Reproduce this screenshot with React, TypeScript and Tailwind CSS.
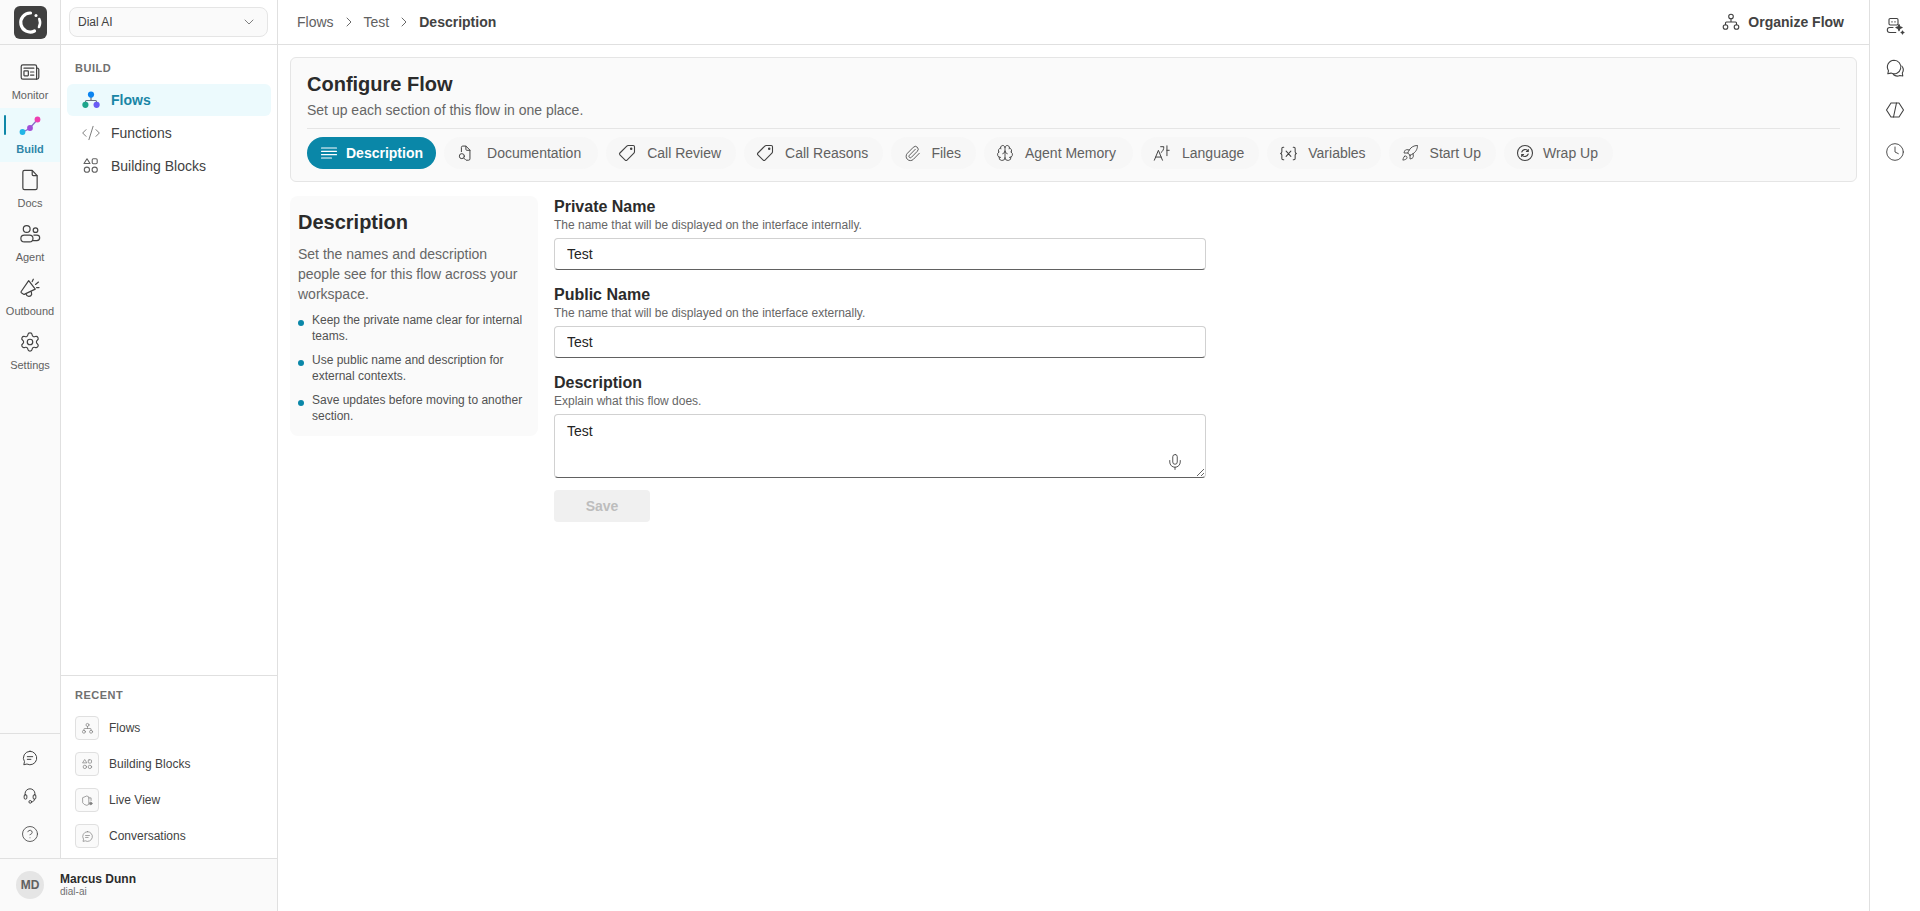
import React from "react";
import { ChevronDown, ChevronRight, CodeXml, Paperclip, Brain, Rocket, Settings, Mic, CircleQuestionMark, Clock } from "lucide-react";

type P = { size?: number; className?: string };

// small wrapper for the hand drawn icons
function Ico({ size = 20, className = "", children }: P & { children: React.ReactNode }) {
  return (
    <svg width={size} height={size} viewBox="0 0 20 20" fill="none" stroke="currentColor" strokeWidth={1.1} strokeLinecap="round" strokeLinejoin="round" className={className}>
      {children}
    </svg>
  );
}

const Logo = () => (
  <svg width="33" height="33" viewBox="0 0 33 33">
    <rect width="33" height="33" rx="6" fill="#404040" />
    <path d="M16.500 7 A9.500 9.500 0 1 0 20.500 25" fill="none" stroke="#fff" strokeWidth="3.200" strokeLinecap="round" />
    <path d="M25.300 13 A9.500 9.500 0 0 1 25 21" fill="none" stroke="#fff" strokeWidth="2.600" strokeLinecap="round" />
    <circle cx="22" cy="9.500" r="1.500" fill="#fff" />
  </svg>
);

const FlowsColor = () => (
  <svg width="20" height="20" viewBox="0 0 20 20">
    <path d="M10 7v3M4.500 13v-1.500a1 1 0 0 1 1-1h9a1 1 0 0 1 1 1V13" fill="none" stroke="#6b7280" strokeWidth="1.200" />
    <circle cx="10" cy="4.600" r="3.100" fill="#0a84f0" />
    <circle cx="4.400" cy="14.800" r="3.100" fill="#1fa58c" />
    <circle cx="15.600" cy="14.800" r="3.100" fill="#6a5cf5" />
  </svg>
);

const BuildColor = () => (
  <svg width="22" height="22" viewBox="0 0 22 22">
    <path d="M3 17.500 10.500 13.500 18.500 4.500" fill="none" stroke="#8b6fc8" strokeWidth="1.400" />
    <circle cx="3.500" cy="17" r="2.900" fill="#22b5e6" />
    <circle cx="11" cy="13" r="2.900" fill="#a04fd8" />
    <circle cx="18.500" cy="4.500" r="2.900" fill="#ee3fb0" />
  </svg>
);

const NewsIco = (p: P) => (
  <Ico {...p}>
    <path d="M3.500 3.500h11a1.500 1.500 0 0 1 1.500 1.500v11.500H3.500A1.500 1.500 0 0 1 2 15V5a1.500 1.500 0 0 1 1.500-1.500z" />
    <path d="M16 6.500h.7A1.300 1.300 0 0 1 18 7.800v7a1.700 1.700 0 0 1-1.700 1.700H16" />
    <path d="M4.500 6.500h9" />
    <rect x="4.500" y="9" width="4" height="4.500" rx="0.500" />
    <path d="M10.500 10h3M10.500 12.800h3" />
  </Ico>
);

const DocIco = (p: P) => (
  <Ico {...p}>
    <path d="M5 1.200h7l4.500 4.800v11.300a1.500 1.500 0 0 1-1.500 1.500H5a1.500 1.500 0 0 1-1.500-1.500V2.700A1.500 1.500 0 0 1 5 1.200z" />
    <path d="M12 1.500v3.500a1 1 0 0 0 1 1h3.300" />
  </Ico>
);

const Blocks = (p: P) => (
  <Ico {...p}>
    <path d="M6 2.800 9 7.500H3z" />
    <rect x="11.200" y="2.800" width="5" height="5" rx="1.200" />
    <circle cx="5.900" cy="13.700" r="2.600" />
    <circle cx="13.700" cy="13.700" r="2.600" />
  </Ico>
);

const Agent = (p: P) => (
  <Ico {...p}>
    <circle cx="7" cy="5.500" r="3.100" />
    <circle cx="15" cy="6.500" r="2.100" />
    <rect x="1.700" y="11" width="11" height="6.200" rx="3.100" />
    <path d="M13.500 11h2.800a2.500 2.500 0 0 1 0 5H13" />
  </Ico>
);

const Megaphone = (p: P) => (
  <Ico {...p}>
    <path d="M8.800 3.300 2 13.200a1 1 0 0 0 .4 1.400l1.800 1a1 1 0 0 0 1 0L14.800 11z" />
    <path d="M6.500 15.500a2.600 2.600 0 0 0 5 .4l-.3-2.500" />
    <path d="M12 4.200 13 2M15 6.800l2.700-2.200M16 9.600h2.200" />
  </Ico>
);

const ChatLines = (p: P) => (
  <Ico {...p}>
    <path d="M10 2.500a7.500 7.500 0 1 1-3.400 14.200l-3.500.8.800-3.400A7.500 7.500 0 0 1 10 2.500z" />
    <path d="M7 8.500h6M7 11.500h4" />
  </Ico>
);

const Headset = (p: P) => (
  <Ico {...p}>
    <path d="M4.500 9V7.500a5.500 5.500 0 0 1 11 0V9" />
    <rect x="3.500" y="8.500" width="3" height="5" rx="1.400" />
    <rect x="13.500" y="8.500" width="3" height="5" rx="1.400" />
    <path d="M15 13.500c0 2-1.500 3-3.200 3" />
    <circle cx="10.300" cy="16.500" r="1.500" />
  </Ico>
);

const OrgFlow = (p: P) => (
  <Ico {...p}>
    <circle cx="10" cy="4.500" r="2.300" />
    <circle cx="4.500" cy="15" r="2.300" />
    <circle cx="15.500" cy="15" r="2.300" />
    <path d="M10 6.800V10M4.500 12.700V11a1 1 0 0 1 1-1h9a1 1 0 0 1 1 1v1.700" />
  </Ico>
);

const Lines = (p: P) => (
  <Ico {...p}>
    <path d="M2.500 5h15M2.500 8.300h15M2.500 11.700h15M2.500 15h10" strokeWidth="1.200" />
  </Ico>
);

const DocSearch = (p: P) => (
  <Ico {...p}>
    <path d="M6 8.500V3.800a1.500 1.500 0 0 1 1.500-1.500H11l4.500 4.500v9.700a1.500 1.500 0 0 1-1.500 1.500h-2.500" />
    <path d="M11 2.500V6a1 1 0 0 0 1 1h3.500" />
    <circle cx="6.500" cy="13.500" r="2.800" />
    <path d="m8.600 15.600 1.900 1.900" />
  </Ico>
);

const TagIco = (p: P) => (
  <Ico {...p}>
    <path d="M11.200 2.500h5a1.300 1.300 0 0 1 1.300 1.300v5a2 2 0 0 1-.6 1.400l-6.900 6.900a1.300 1.300 0 0 1-1.800 0l-5.300-5.300a1.300 1.300 0 0 1 0-1.800l6.900-6.900a2 2 0 0 1 1.400-.6z" />
    <circle cx="14.200" cy="5.800" r="0.700" fill="currentColor" />
  </Ico>
);

const Lang = (p: P) => (
  <Ico {...p}>
    <path d="M1.500 18 6 7l4.500 11M3 14.500h6" />
    <path d="M8.500 3H12c0 3-1 5-3 6.500M15.500 2v11M15.500 7H18" />
  </Ico>
);

const Vars = (p: P) => (
  <Ico {...p}>
    <path d="M5 3.500H4.300A1.300 1.300 0 0 0 3 4.800v3.400c0 .9-.5 1.500-1.300 1.800.8.300 1.300.9 1.300 1.800v3.400a1.300 1.300 0 0 0 1.300 1.300H5" />
    <path d="M15 3.500h.7A1.300 1.300 0 0 1 17 4.800v3.400c0 .9.500 1.500 1.300 1.800-.8.300-1.300.9-1.300 1.800v3.400a1.300 1.300 0 0 1-1.300 1.300H15" />
    <path d="m7.500 7.500 5 5.500M12.500 7.500l-5 5.500" />
  </Ico>
);

const WrapUp = (p: P) => (
  <Ico {...p}>
    <circle cx="10" cy="10" r="7.500" />
    <path d="M6.800 9a3.400 3.400 0 0 1 5.800-1.300l.7.800M13.300 6.600v1.900h-1.900" />
    <path d="M13.200 11a3.400 3.400 0 0 1-5.800 1.300l-.7-.8M6.700 13.400v-1.900h1.900" />
  </Ico>
);

const BotSpark = (p: P) => (
  <Ico {...p}>
    <rect x="4" y="2.500" width="9" height="6.500" rx="1.200" />
    <path d="M7 5.500v.6M10 5.500v.6" />
    <path d="M8 11.500H4.800a2.200 2.200 0 0 0 0 5h6" />
    <path d="M14 8.500l.9 2.200 2.200.9-2.200.9-.9 2.200-.9-2.200-2.200-.9 2.200-.9z" fill="currentColor" />
    <path d="M17.500 15l.4 1.100 1.100.4-1.100.4-.4 1.100-.4-1.100-1.100-.4 1.100-.4z" fill="currentColor" />
  </Ico>
);

const Chats = (p: P) => (
  <Ico {...p}>
    <path d="M9 2.200a6.800 6.800 0 1 1-3 12.900l-3.200.7.700-3.100A6.800 6.800 0 0 1 9 2.200z" />
    <path d="M16.800 8a6 6 0 0 1 .5 7l.5 3-3-.5a6 6 0 0 1-6.500-1" />
  </Ico>
);

const LiveIco = (p: P) => (
  <Ico {...p}>
    <path d="M3 5.500 9 3l3 1.500V16l-3 1.500L5 16 3 14z" />
    <path d="M12 6h3.500v4" />
    <circle cx="15" cy="14.500" r="2" fill="currentColor" />
  </Ico>
);

const CodeHex = (p: P) => (
  <Ico {...p}>
    <path d="M6 3 1.500 10 6 17h8l4.500-7L14 3z" />
    <path d="m11.500 3-3 14" />
  </Ico>
);

const Recents = [
  { label: "Flows", icon: <OrgFlow size={13} /> },
  { label: "Building Blocks", icon: <Blocks size={13} /> },
  { label: "Live View", icon: <LiveIco size={13} /> },
  { label: "Conversations", icon: <ChatLines size={13} /> },
];

const railItems = [
  { label: "Monitor", icon: <NewsIco size={22} /> },
  { label: "Build", icon: <BuildColor />, active: true },
  { label: "Docs", icon: <DocIco size={22} /> },
  { label: "Agent", icon: <Agent size={22} /> },
  { label: "Outbound", icon: <Megaphone size={22} /> },
  { label: "Settings", icon: <Settings size={22} strokeWidth={1.3} /> },
];

const tabs = [
  { label: "Documentation", icon: <DocSearch size={18} />, cls: "gap-[12px] pr-[17px]" },
  { label: "Call Review", icon: <TagIco size={20} />, cls: "gap-[10px] pr-[15px]" },
  { label: "Call Reasons", icon: <TagIco size={20} />, cls: "gap-[10px] pr-[15px]" },
  { label: "Files", icon: <Paperclip size={17} strokeWidth={1.2} />, cls: "gap-[9px] pr-[15px]" },
  { label: "Agent Memory", icon: <Brain size={18} strokeWidth={1.2} />, cls: "gap-[10px] pr-[17px]" },
  { label: "Language", icon: <Lang size={18} />, cls: "gap-[10px] pr-[15px]" },
  { label: "Variables", icon: <Vars size={19} />, cls: "gap-[10px] pr-[15px]" },
  { label: "Start Up", icon: <Rocket size={18} strokeWidth={1.2} />, cls: "gap-[10px] pr-[15px]" },
  { label: "Wrap Up", icon: <WrapUp size={20} />, cls: "gap-[8px] pr-[15px]" },
];

const tips = [
  "Keep the private name clear for internal teams.",
  "Use public name and description for external contexts.",
  "Save updates before moving to another section.",
];

function Field({ label, help, children }: { label: string; help: string; children: React.ReactNode }) {
  return (
    <div className="flex flex-col">
      <label className="text-[16px] leading-[22px] font-bold text-[#2b2b2b]">{label}</label>
      <p className="-mt-[1px] mb-[5px] text-[12px] leading-[16px] text-[#666666]">{help}</p>
      {children}
    </div>
  );
}

const fieldBox = "w-full rounded-[4px] border border-[#d1d1d1] border-b-[#616161] bg-white px-[12px] text-[14px] text-[#242424] outline-none";

export default function App() {
  return (
    <div className="flex h-screen w-full overflow-hidden bg-white font-['Liberation_Sans',Arial,sans-serif] text-[#242424]">
      {/* left column: rail, build panel, user */}
      <div className="flex w-[278px] shrink-0 flex-col">
        <div className="flex min-h-0 flex-1">
          <aside className="flex w-[61px] shrink-0 flex-col border-r border-[#e0e0e0] bg-[#fafafa]">
            <div className="flex h-[45px] items-center justify-center border-b border-[#e0e0e0]">
              <Logo />
            </div>
            <nav className="flex flex-1 flex-col pt-[9px]">
              {railItems.map((it) => (
                <div key={it.label} className={`relative flex h-[54px] flex-col items-center justify-center ${it.active ? "bg-[#ecfafd]" : ""}`}>
                  {it.active && <span className="absolute left-[4px] top-[7px] h-[20px] w-[2px] rounded bg-[#0e87a8]" />}
                  <span className={`flex h-[26px] items-center pb-[2px] ${it.active ? "text-[#2a86a8]" : "text-[#424242]"}`}>{it.icon}</span>
                  <span className={`mt-[1px] text-[11px] leading-[16px] ${it.active ? "font-bold text-[#2f86a8]" : "text-[#616161]"}`}>{it.label}</span>
                </div>
              ))}
            </nav>
            <div className="flex h-[125px] flex-col items-center gap-[20px] border-t border-[#e0e0e0] pt-[15px] text-[#424242]">
              <ChatLines size={18} />
              <Headset size={18} />
              <CircleQuestionMark size={18} strokeWidth={1.1} />
            </div>
          </aside>

          <aside className="flex w-[217px] shrink-0 flex-col border-r border-[#e0e0e0] bg-white">
            <div className="flex h-[45px] items-center border-b border-[#e0e0e0] pl-[8px] pr-[9px]">
              <div className="flex h-[30px] w-full items-center justify-between rounded-[8px] border border-[#e5e5e5] bg-[#fafafa] pl-[8px] pr-[10px] text-[12px] text-[#424242]">
                Dial AI
                <ChevronDown size={16} strokeWidth={1.2} className="text-[#616161]" />
              </div>
            </div>
            <div className="flex-1 px-[6px] pt-[16px]">
              <h2 className="pl-[8px] text-[11px] font-bold leading-[14px] tracking-[0.5px] text-[#707070]">BUILD</h2>
              <ul className="mt-[9px] flex flex-col gap-px">
                <li className="flex h-[32px] items-center gap-[10px] rounded-[6px] bg-[#ecfafd] pl-[14px] text-[14px] font-bold text-[#1a86a6]">
                  <FlowsColor />
                  Flows
                </li>
                <li className="flex h-[32px] items-center gap-[10px] rounded-[6px] pl-[14px] text-[14px] text-[#424242]">
                  <CodeXml size={20} strokeWidth={1} className="text-[#616161]" />
                  Functions
                </li>
                <li className="flex h-[32px] items-center gap-[10px] rounded-[6px] pl-[14px] text-[14px] text-[#424242]">
                  <Blocks size={20} className="text-[#616161]" />
                  Building Blocks
                </li>
              </ul>
            </div>
            <div className="flex h-[183px] flex-col border-t border-[#e0e0e0] px-[14px] pt-[12px]">
              <h2 className="text-[11px] font-bold leading-[14px] tracking-[0.5px] text-[#707070]">RECENT</h2>
              <ul className="mt-[14px] flex flex-col gap-[12px]">
                {Recents.map((r) => (
                  <li key={r.label} className="flex items-center gap-[10px] text-[12px] text-[#424242]">
                    <span className="flex h-[24px] w-[24px] items-center justify-center rounded-[4px] border border-[#e0e0e0] bg-[#fafafa] text-[#808080]">{r.icon}</span>
                    {r.label}
                  </li>
                ))}
              </ul>
            </div>
          </aside>
        </div>
        <footer className="flex h-[53px] shrink-0 items-center gap-[16px] border-r border-t border-[#e0e0e0] bg-[#fafafa] pl-[16px]">
          <span className="flex h-[28px] w-[28px] items-center justify-center rounded-full bg-[#e5e5e5] text-[12px] font-bold text-[#616161]">MD</span>
          <div className="flex flex-col">
            <span className="text-[12px] font-bold leading-[14px] text-[#2b2b2b]">Marcus Dunn</span>
            <span className="text-[10px] leading-[12px] text-[#707070]">dial-ai</span>
          </div>
        </footer>
      </div>

      {/* main */}
      <main className="flex min-w-0 flex-1 flex-col">
        <header className="flex h-[45px] shrink-0 items-center justify-between border-b border-[#e0e0e0] pl-[19px] pr-[25px] text-[14px] text-[#616161]">
          <div className="flex items-center">
            <span>Flows</span>
            <ChevronRight size={16} strokeWidth={1.2} className="mx-[7px] text-[#424242]" />
            <span>Test</span>
            <ChevronRight size={16} strokeWidth={1.2} className="mx-[7px] text-[#424242]" />
            <span className="font-bold text-[#424242]">Description</span>
          </div>
          <div className="flex items-center gap-[7px] font-bold text-[#424242]">
            <OrgFlow size={20} />
            Organize Flow
          </div>
        </header>

        <div className="flex flex-col gap-[14px] px-[12px] pt-[12px]">
          <section className="rounded-[6px] border border-[#e5e5e5] bg-[#fafafa] px-[16px] pt-[13px] pb-[12px]">
            <h1 className="text-[20px] font-bold leading-[26px] text-[#2b2b2b]">Configure Flow</h1>
            <p className="mt-[3px] text-[14px] leading-[20px] text-[#666666]">Set up each section of this flow in one place.</p>
            <div className="mt-[8px] border-t border-[#e5e5e5] pt-[8px]">
              <div className="flex gap-[8px]">
                <div className="flex h-[32px] items-center gap-[7px] rounded-full bg-[#0a87a8] pl-[12px] pr-[13px] text-[14px] font-bold text-white">
                  <Lines size={20} />
                  Description
                </div>
                {tabs.map((t) => (
                  <div key={t.label} className={`flex h-[32px] items-center rounded-full bg-[#f7f7f7] pl-[11px] text-[14px] text-[#616161] ${t.cls}`}>
                    <span className="flex w-[20px] justify-center text-[#424242]">{t.icon}</span>
                    {t.label}
                  </div>
                ))}
              </div>
            </div>
          </section>

          <div className="flex gap-[16px]">
            <section className="h-[240px] w-[248px] shrink-0 rounded-[8px] bg-[#fafafa] p-[8px]">
              <h2 className="mt-[4px] text-[20px] font-bold leading-[28px] text-[#2b2b2b]">Description</h2>
              <p className="mt-[8px] text-[14px] leading-[20px] text-[#666666]">Set the names and description people see for this flow across your workspace.</p>
              <ul className="mt-[8px] flex flex-col gap-[8px]">
                {tips.map((t) => (
                  <li key={t} className="flex items-start gap-[8px] text-[12px] leading-[16px] text-[#525252]">
                    <span className="mt-[8px] h-[6px] w-[6px] shrink-0 rounded-full bg-[#0a87a8]" />
                    {t}
                  </li>
                ))}
              </ul>
            </section>

            <form className="flex w-[652px] flex-col gap-[14px]">
              <Field label="Private Name" help="The name that will be displayed on the interface internally.">
                <input defaultValue="Test" className={`${fieldBox} h-[32px]`} />
              </Field>
              <Field label="Public Name" help="The name that will be displayed on the interface externally.">
                <input defaultValue="Test" className={`${fieldBox} h-[32px]`} />
              </Field>
              <Field label="Description" help="Explain what this flow does.">
                <div className="relative">
                  <textarea defaultValue="Test" className={`${fieldBox} block h-[64px] py-[6px]`} />
                  <Mic size={18} strokeWidth={1.2} className="absolute bottom-[7px] right-[22px] text-[#424242]" />
                </div>
              </Field>
              <button type="button" disabled className="-mt-[2px] h-[32px] w-[96px] rounded-[4px] bg-[#f0f0f0] text-[14px] font-bold text-[#bdbdbd]">
                Save
              </button>
            </form>
          </div>
        </div>
      </main>

      {/* right rail */}
      <aside className="flex w-[51px] shrink-0 flex-col items-center gap-[22px] border-l border-[#e0e0e0] pt-[16px] text-[#424242]">
        <BotSpark size={20} />
        <Chats size={20} />
        <CodeHex size={20} />
        <Clock size={20} strokeWidth={1.1} />
      </aside>
    </div>
  );
}
